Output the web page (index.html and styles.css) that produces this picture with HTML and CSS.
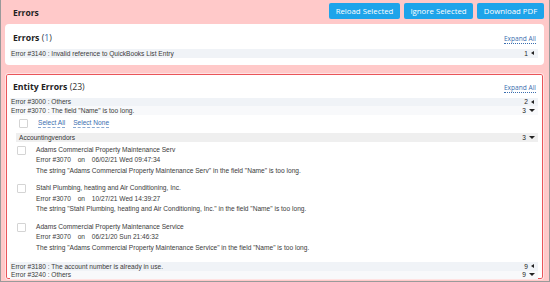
FILE: index.html
```html
<!DOCTYPE html>
<html lang="en">

<head>
    <meta charset="UTF-8">
    <title>Errors</title>
    <link rel="stylesheet" href="styles.css">
</head>

<body>
    <div class="topbar">
        <h1 class="page-title">Errors</h1>
        <div class="actions">
            <button class="btn">Reload Selected</button>
            <button class="btn">Ignore Selected</button>
            <button class="btn">Download PDF</button>
        </div>
    </div>

    <div class="card">
        <div class="card-head">
            <h2 class="card-title">Errors <span class="count">(<em>1</em>)</span></h2>
            <a class="expand">Expand All</a>
        </div>
        <div class="row odd">
            <span>Error #3140 : Invalid reference to QuickBooks List Entry</span>
            <span class="num">1 <i class="arr-left"></i></span>
        </div>
    </div>

    <div class="card entity">
        <div class="card-head">
            <h2 class="card-title">Entity Errors <span class="count">(23)</span></h2>
            <a class="expand">Expand All</a>
        </div>
        <div class="row odd">
            <span>Error #3000 : Others</span>
            <span class="num">2 <i class="arr-left"></i></span>
        </div>
        <div class="row even">
            <span>Error #3070 : The field "Name" is too long.</span>
            <span class="num">3 <i class="arr-down"></i></span>
        </div>
        <div class="select-row">
            <span class="check"></span>
            <a class="link">Select All</a>
            <a class="link">Select None</a>
        </div>
        <div class="group">
            <span>Accountingvendors</span>
            <span class="num">3 <i class="arr-down"></i></span>
        </div>
        <div class="items">
            <div class="item">
                <span class="check"></span>
                <div class="item-text">
                    <div>Adams Commercial Property Maintenance Serv</div>
                    <div>Error #3070 <span class="on">on</span> 06/02/21 Wed 09:47:34</div>
                    <div>The string "Adams Commercial Property Maintenance Serv" in the field "Name" is too long.</div>
                </div>
            </div>
            <div class="item">
                <span class="check"></span>
                <div class="item-text">
                    <div>Stahl Plumbing, heating and Air Conditioning, Inc.</div>
                    <div>Error #3070 <span class="on">on</span> 10/27/21 Wed 14:39:27</div>
                    <div>The string "Stahl Plumbing, heating and Air Conditioning, Inc." in the field "Name" is too long.</div>
                </div>
            </div>
            <div class="item">
                <span class="check"></span>
                <div class="item-text">
                    <div>Adams Commercial Property Maintenance Service</div>
                    <div>Error #3070 <span class="on">on</span> 06/21/20 Sun 21:46:32</div>
                    <div>The string "Adams Commercial Property Maintenance Service" in the field "Name" is too long.</div>
                </div>
            </div>
        </div>
        <div class="row odd">
            <span>Error #3180 : The account number is already in use.</span>
            <span class="num">9 <i class="arr-left"></i></span>
        </div>
        <div class="row even">
            <span>Error #3240 : Others</span>
            <span class="num">9 <i class="arr-down"></i></span>
        </div>
    </div>
</body>

</html>
```

FILE: styles.css
```css
* {
    box-sizing: border-box;
}

html,
body {
    margin: 0;
    height: 282px;
    overflow: hidden;
}

body {
    background: #ffc9c9;
    border: 1px solid #9a9a9a;
    border-top: none;
    font-family: "Liberation Sans", Arial, sans-serif;
    font-size: 6.6px;
    color: #3a3a3a;
}

.topbar {
    display: flex;
    justify-content: space-between;
    align-items: flex-start;
    height: 23px;
    padding: 3px 5px 0 12px;
}

.page-title {
    margin: 4px 0 0;
    font-family: "Open Sans", sans-serif;
    font-size: 8.5px;
    font-weight: bold;
    color: #222;
}

.actions {
    display: flex;
    gap: 4px;
}

.btn {
    height: 16px;
    padding: 0 4px;
    background: #1ea4ea;
    color: #fff;
    border: none;
    border-radius: 2px;
    font-family: "Open Sans", sans-serif;
    font-size: 7.8px;
    cursor: pointer;
}

.btn:nth-child(1) { width: 71px; }
.btn:nth-child(2) { width: 69px; }
.btn:nth-child(3) { width: 67px; }

.card {
    background: #fff;
    border-radius: 4px;
    margin: 1px 5px 0 4px;
    padding: 0 6px 7px 5px;
}

.card-head {
    display: flex;
    justify-content: space-between;
    align-items: center;
    height: 25px;
    padding: 2px 2px 0 3px;
}

.card-title {
    margin: 0;
    font-family: "Open Sans", sans-serif;
    font-size: 8.7px;
    font-weight: bold;
    color: #222;
}

.count {
    font-weight: normal;
    color: #333;
}

.count em {
    font-style: normal;
    color: #2c64a8;
}

.expand {
    font-family: "Open Sans", sans-serif;
    font-size: 6.6px;
    color: #3b6eaf;
    border-bottom: 1px dotted #3b6eaf;
    line-height: 8px;
    margin-top: 3px;
}

.row {
    display: flex;
    justify-content: space-between;
    align-items: center;
    height: 8.5px;
    padding: 0 3px 0 1px;
}

.row.odd {
    background: #f0f3f7;
}

.row.even {
    background: #f8f9fb;
}

.num {
    display: flex;
    align-items: center;
    gap: 3px;
    color: #222;
}

.arr-left {
    width: 0;
    height: 0;
    border-top: 2.5px solid transparent;
    border-bottom: 2.5px solid transparent;
    border-right: 3px solid #222;
    margin-right: 1px;
}

.arr-down {
    width: 0;
    height: 0;
    border-left: 3px solid transparent;
    border-right: 3px solid transparent;
    border-top: 3.5px solid #222;
}

.entity {
    margin-top: 8px;
    height: 207px;
    border: 1px solid #ffe3e3;
    box-shadow: inset 0 0 0 1px #e9555a;
    padding: 0 5px 0 4px;
    border-radius: 3px;
}

.entity .card-head {
    height: 24px;
    padding-top: 3px;
}

.select-row {
    display: flex;
    align-items: center;
    height: 16px;
    padding: 1px 0 0 9px;
}

.check {
    width: 9px;
    height: 9px;
    border: 1px solid #d4d4d4;
    border-radius: 1px;
    background: #fff;
    flex: none;
}

.select-row .check {
    margin-right: 10px;
}

.link {
    color: #3b6eaf;
    border-bottom: 1px dashed #8aa9d2;
    line-height: 8px;
    margin-right: 8px;
}

.group {
    display: flex;
    justify-content: space-between;
    align-items: center;
    height: 9px;
    margin: 2px 0 0 6px;
    padding: 0 3px 0 3px;
    background: #efefef;
    color: #333;
}

.items {
    padding: 3px 0 9px 7px;
}

.item {
    display: flex;
    margin-bottom: 7px;
}

.item:last-child {
    margin-bottom: 0;
}

.item .check {
    margin: 1px 10px 0 0;
}

.item-text div {
    line-height: 10.5px;
    white-space: nowrap;
}

.on {
    margin: 0 5px;
}
```
